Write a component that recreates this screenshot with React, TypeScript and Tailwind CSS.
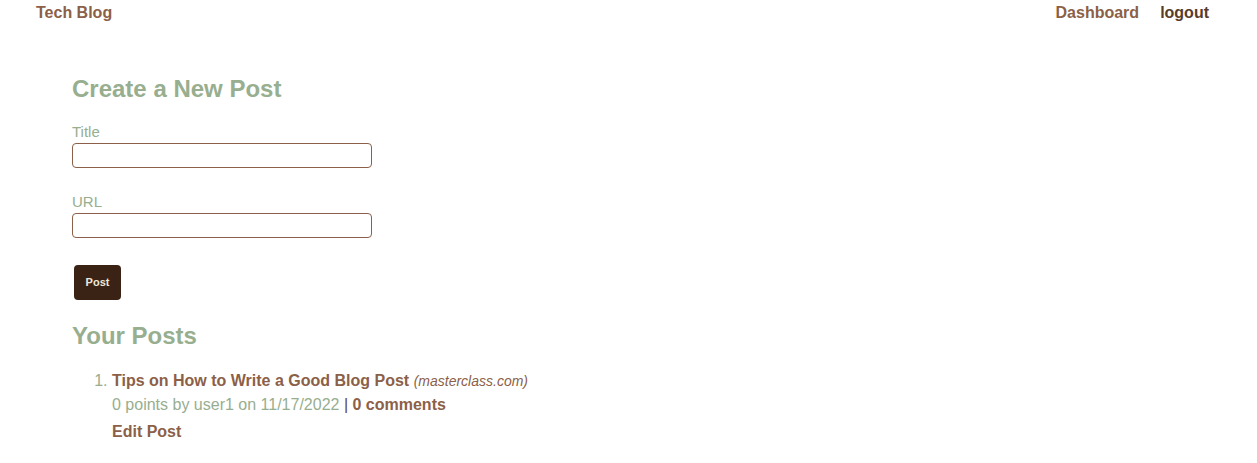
import React from "react";

export default function App() {
  return (
    <div className="min-h-[463px] bg-white font-['Liberation_Sans',Arial,sans-serif]">
      <header className="flex items-start justify-between pl-9 pr-12 pt-px">
        <a className="text-base font-bold leading-6 text-[#8c5f48]">Tech Blog</a>
        <nav className="flex gap-[21px] text-base font-bold leading-6">
          <a className="text-[#8c5f48]">Dashboard</a>
          <a className="text-[#5a3b2a]">logout</a>
        </nav>
      </header>
      <main className="px-[72px]">
        <h2 className="mt-[50px] text-[24px] font-bold leading-[28px] text-[#97ae8f]">Create a New Post</h2>
        <form className="flex flex-col items-start">
          <label className="mt-[20px] text-[15px] leading-[18px] text-[#97ae8f]">Title</label>
          <input className="mt-[2px] h-[25px] w-[300px] rounded-[4px] border border-[#8c5f48] bg-white" />
          <label className="mt-[25px] text-[15px] leading-[18px] text-[#97ae8f]">URL</label>
          <input className="mt-[2px] h-[25px] w-[300px] rounded-[4px] border border-[#8c5f48] bg-white" />
          <button
            type="button"
            className="ml-[2px] mt-[27px] h-[35px] w-[47px] rounded-[4px] bg-[#3a2314] text-[11px] font-bold text-[#f1e6d6]"
          >
            Post
          </button>
        </form>
        <h2 className="mt-[22px] text-[24px] font-bold leading-[28px] text-[#97ae8f]">Your Posts</h2>
        <ol className="mt-[19px] list-decimal pl-10 text-base leading-6 text-[#97ae8f]">
          <li>
            <div>
              <a className="font-bold text-[#8c5f48]">Tips on How to Write a Good Blog Post</a>{" "}
              <span className="text-[14px] italic text-[#8c5f48]">(masterclass.com)</span>
            </div>
            <div>
              0 points by user1 on 11/17/2022 <span className="text-[#5e4a3a]">|</span>{" "}
              <a className="font-bold text-[#8c5f48]">0 comments</a>
            </div>
            <div className="mt-[3px]">
              <a className="font-bold text-[#8c5f48]">Edit Post</a>
            </div>
          </li>
        </ol>
      </main>
    </div>
  );
}
